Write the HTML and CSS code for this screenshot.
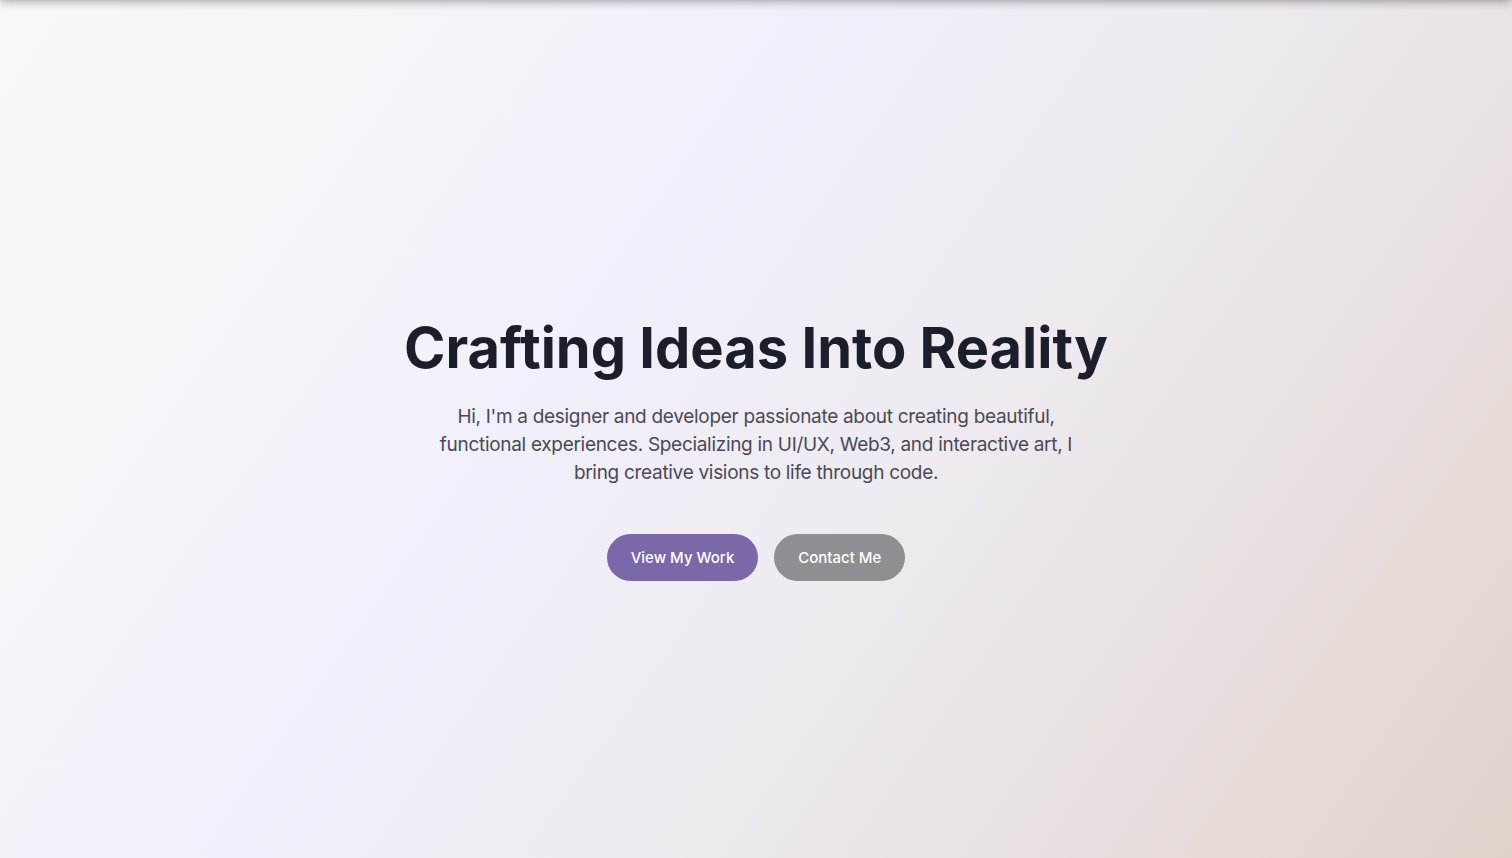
FILE: index.html
```html
<!DOCTYPE html>
<html lang="en">
<head>
<meta charset="utf-8">
<title>Portfolio</title>
<link rel="stylesheet" href="styles.css">
</head>
<body>
<header class="topbar"></header>
<main class="hero">
  <div class="hero-content">
    <h1 class="hero-title">Crafting Ideas Into Reality</h1>
    <p class="hero-text">Hi, I'm a designer and developer passionate about creating beautiful, functional experiences. Specializing in UI/UX, Web3, and interactive art, I bring creative visions to life through code.</p>
    <div class="hero-actions">
      <a class="btn btn-primary" href="#work">View My Work</a>
      <a class="btn btn-secondary" href="#contact">Contact Me</a>
    </div>
  </div>
</main>
</body>
</html>
```
FILE: styles.css
```css
* { box-sizing: border-box; }
html, body { margin: 0; padding: 0; height: 100%; }
body {
  font-family: Inter, "Noto Sans", sans-serif;
  font-feature-settings: "liga" 0, "calt" 0;
  background: linear-gradient(125deg, #f9f9fa 0%, #f1eff9 40%, #eeeaf0 60%, #e0d4ca 100%);
  overflow: hidden;
}
.topbar {
  position: fixed;
  top: -60px;
  left: 0;
  right: 0;
  height: 60px;
  background: #333;
  box-shadow: 0 1px 10px rgba(0, 0, 0, 0.38);
}
.hero {
  height: 858px;
  display: flex;
  align-items: center;
  justify-content: center;
  padding-top: 38px;
}
.hero-content {
  display: flex;
  flex-direction: column;
  align-items: center;
  text-align: center;
}
.hero-title {
  margin: 0 0 20px;
  font-size: 56px;
  font-weight: 700;
  line-height: 1.2;
  letter-spacing: 0;
  color: #1c1f2b;
}
.hero-text {
  margin: 0 0 47px;
  max-width: 640px;
  font-size: 19px;
  line-height: 28px;
  letter-spacing: -0.3px;
  color: #4a4a55;
}
.hero-actions {
  display: flex;
  gap: 16px;
}
.btn {
  display: inline-block;
  padding: 12px 24px;
  border-radius: 999px;
  font-size: 15px;
  line-height: 23px;
  font-weight: 500;
  color: #fff;
  text-decoration: none;
}
.btn-primary { background: #7b68a8; }
.btn-secondary { background: #8e8e93; }
```
